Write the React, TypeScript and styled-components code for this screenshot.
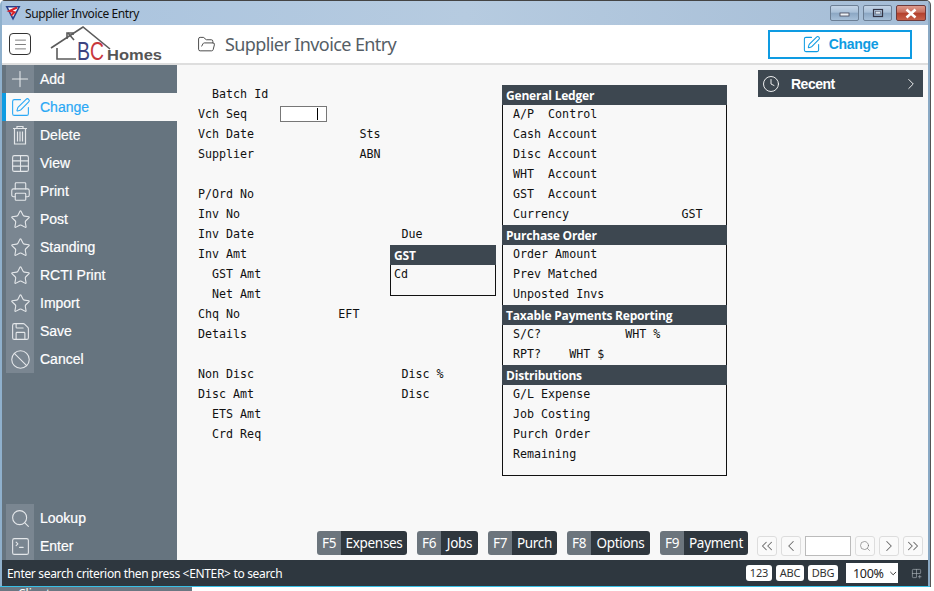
import React from "react";
import styled, { createGlobalStyle } from "styled-components";
import {
  Plus, SquarePen, Table, Printer, Star, Save, Ban, Search, SquareTerminal, Clock,
  ChevronRight, ChevronLeft, ChevronsLeft, ChevronsRight, ChevronDown, FolderOpen, Menu, Grid2x2Plus,
} from "lucide-react";

const Global = createGlobalStyle`
  html, body { margin: 0; padding: 0; width: 934px; height: 591px; overflow: hidden; background: #fff; }
  * { box-sizing: border-box; }
`;

const Page = styled.div`
  width: 934px;
  height: 591px;
  display: flex;
  flex-direction: column;
  overflow: hidden;
  background: #fff;
`;
const WindowFrame = styled.div`
  width: 930px;
  height: 587px;
  display: flex;
  flex-direction: column;
  border-left: 2px solid #8fb0cc;
  border-right: 2px solid #8aa9c4;
  border-top: 1px solid #444;
  border-top-left-radius: 5px;
  border-top-right-radius: 5px;
  background: #f8f8f8;
  box-shadow: 1px 0 0 #555;
`;
const TitleBar = styled.div`
  height: 24px;
  flex: none;
  display: flex;
  align-items: center;
  padding: 0 2px 0 3px;
  background: linear-gradient(90deg, #a9c3de 0%, #b6cbe0 50%, #a5bdd6 100%);
`;
const TitleText = styled.span`
  margin-left: 4px;
  font: 12px "Noto Sans", sans-serif;
  letter-spacing: -0.4px;
  color: #111;
  flex: 1;
`;
const WinButtons = styled.div`
  display: flex;
  gap: 4px;
`;
const WinButton = styled.div<{ $close?: boolean }>`
  width: ${(p) => (p.$close ? 30 : 29)}px;
  height: 16px;
  border: 1px solid ${(p) => (p.$close ? "#6e3a3a" : "#6c7f95")};
  border-radius: 2px;
  display: flex;
  align-items: center;
  justify-content: center;
  background: ${(p) =>
    p.$close
      ? "linear-gradient(#dd9a8c 0%, #c9705f 45%, #b2402c 50%, #c7604a 100%)"
      : "linear-gradient(#c3d4e6 0%, #a9c0d8 45%, #8ba6c3 50%, #a6bfd8 100%)"};
`;
const Header = styled.div`
  height: 40px;
  flex: none;
  display: flex;
  align-items: center;
  background: #fff;
  border-bottom: 2px solid #dedede;
  padding: 0 16px 0 7px;
`;
const Hamburger = styled.div`
  width: 22px;
  height: 22px;
  border: 1px solid #333;
  border-radius: 4px;
  display: flex;
  align-items: center;
  justify-content: center;
  color: #555;
  margin-right: 18px;
`;
const LogoSvg = styled.svg`
  width: 114px;
  height: 40px;
  margin-right: 34px;
  flex: none;
`;
const PageTitle = styled.div`
  display: flex;
  align-items: center;
  gap: 9px;
  flex: 1;
  color: #555e66;
  font: 18px "Noto Sans", sans-serif;
  letter-spacing: -0.6px;
`;
const ChangeButton = styled.div`
  width: 144px;
  height: 29px;
  border: 2px solid #0e9be2;
  display: flex;
  align-items: center;
  justify-content: center;
  gap: 8px;
  color: #0e9be2;
  font: bold 14px "Liberation Sans", sans-serif;
  letter-spacing: -0.3px;
`;
const Body = styled.div`
  flex: 1;
  min-height: 0;
  display: flex;
`;
const Sidebar = styled.nav`
  width: 175px;
  flex: none;
  background: #66747f;
  display: flex;
  flex-direction: column;
  justify-content: space-between;
`;
const NavGroup = styled.div`
  display: flex;
  flex-direction: column;
`;
const NavItem = styled.div<{ $active?: boolean }>`
  height: 28px;
  display: flex;
  align-items: center;
  padding-left: 4px;
  background: ${(p) => (p.$active ? "#f8f8f8" : "#66747f")};
  color: ${(p) => (p.$active ? "#2aa8f5" : "#fff")};
  box-shadow: ${(p) => (p.$active ? "inset 4px 0 0 #0e9be2" : "none")};
  font: 14px "Liberation Sans", sans-serif;
  -webkit-text-stroke: 0.2px currentColor;
`;
const NavIcon = styled.span<{ $active?: boolean }>`
  width: 28px;
  height: 28px;
  margin-right: 6px;
  display: flex;
  align-items: center;
  justify-content: center;
  background: ${(p) => (p.$active ? "transparent" : "#7a8691")};
  color: ${(p) => (p.$active ? "#2aa8f5" : "#e4e7ea")};
`;
const Main = styled.main`
  flex: 1;
  min-width: 0;
  display: flex;
  flex-direction: column;
`;
const Work = styled.div`
  flex: 1;
  min-height: 0;
  display: flex;
  position: relative;
`;
const FormColumn = styled.div`
  width: 325px;
  flex: none;
  padding: 19px 0 0 21px;
`;
const FormRow = styled.div`
  height: 20px;
  display: flex;
  align-items: center;
  white-space: pre;
  font: 11.67px/20px "DejaVu Sans Mono", monospace;
  color: #111;
`;
const SeqLabel = styled.span`
  width: 82px;
`;
const SeqInput = styled.div`
  width: 47px;
  height: 16px;
  background: #fff;
  border: 1px solid #777;
  padding: 1px 0 1px 36px;
`;
const Caret = styled.div`
  width: 1px;
  height: 12px;
  background: #000;
`;
const GstBox = styled.div`
  position: absolute;
  left: 213px;
  top: 180px;
  width: 106px;
  height: 51px;
  border: 1px solid #111;
  border-top: none;
`;
const SectionHead = styled.div`
  height: 20px;
  background: #3d4750;
  color: #fff;
  font: bold 12px/22px "Open Sans", sans-serif;
  letter-spacing: -0.2px;
  padding-left: 4px;
  margin: 0 -1px;
`;
const GstText = styled(FormRow)`
  padding: 0 0 2px 3px;
`;
const Ledger = styled.div`
  width: 225px;
  height: 391px;
  flex: none;
  margin-top: 20px;
  border: 1px solid #111;
  border-top: none;
`;
const LedgerRow = styled(FormRow)`
  padding: 0 0 2px 10px;
`;
const RightColumn = styled.div`
  flex: 1;
  display: flex;
  justify-content: flex-end;
  padding: 5px 5px 0 0;
  align-items: flex-start;
`;
const Recent = styled.div`
  width: 165px;
  height: 27px;
  background: #3d4750;
  color: #fff;
  display: flex;
  align-items: center;
  padding: 0 3px 0 4px;
  font: bold 14px "Liberation Sans", sans-serif;
  letter-spacing: -0.5px;
`;
const RecentLabel = styled.span`
  flex: 1;
  margin-left: 11px;
`;
const ActionBar = styled.div`
  flex: none;
  height: 29px;
  display: flex;
  align-items: flex-start;
  padding-right: 5px;
  justify-content: flex-end;
`;
const FKeys = styled.div`
  display: flex;
  gap: 10px;
  margin-right: 9px;
`;
const FKey = styled.div<{ $w: number }>`
  width: ${(p) => p.$w}px;
  height: 24px;
  display: flex;
  border-radius: 3px;
  overflow: hidden;
  color: #fff;
  font: 13.5px/24px "Noto Sans", sans-serif;
  letter-spacing: -0.3px;
`;
const FCode = styled.span`
  width: 24px;
  flex: none;
  background: #6c757d;
  text-align: center;
`;
const FName = styled.span`
  flex: 1;
  background: #2f373e;
  text-align: center;
`;
const Pager = styled.div`
  display: flex;
  gap: 4px;
  padding-top: 5px;
`;
const PagerButton = styled.div`
  width: 20px;
  height: 20px;
  border: 1px solid #ddd;
  border-radius: 3px;
  display: flex;
  align-items: center;
  justify-content: center;
  color: #6a6a6a;
  background: #fafafa;
`;
const PagerInput = styled.div`
  width: 46px;
  height: 20px;
  background: #fff;
  border: 1px solid #bbb;
`;
const StatusBar = styled.div`
  height: 26px;
  flex: none;
  display: flex;
  align-items: center;
  background: #2e373f;
  color: #fff;
  padding: 0 0 0 5px;
`;
const StatusText = styled.span`
  flex: 1;
  font: 12px "Noto Sans", sans-serif;
  letter-spacing: -0.33px;
`;
const Badge = styled.span<{ $w: number }>`
  width: ${(p) => p.$w}px;
  height: 16px;
  background: #fff;
  color: #333;
  border-radius: 3px;
  margin-right: 4px;
  text-align: center;
  font: 11px/16px "Noto Sans", sans-serif;
  letter-spacing: -0.2px;
`;
const Zoom = styled.div`
  width: 52px;
  height: 20px;
  margin: 0 13px 0 4px;
  background: #fff;
  color: #222;
  display: flex;
  align-items: center;
  gap: 4px;
  padding-left: 7px;
  font: 12.5px "Noto Sans", sans-serif;
  letter-spacing: -0.3px;
`;
const GridIcon = styled.span`
  display: flex;
  margin-right: 6px;
  color: #aab2b8;
`;
const CyanLine = styled.div`
  height: 1px;
  flex: none;
  margin: 0 -2px;
  background: #39c0e6;
`;
const TaskStrip = styled.div`
  width: 192px;
  height: 4px;
  flex: none;
  overflow: hidden;
  background: #6b7782;
  color: #fff;
  padding-left: 18px;
  font: 12px/14px "Noto Sans", sans-serif;
`;

const ic = { size: 21, strokeWidth: 1.25 };

const TrashIcon = () => (
  <svg width="22" height="22" viewBox="0 0 22 22" fill="none" stroke="currentColor" strokeWidth="1.2">
    <path d="M4 4.5h14M8 4.5V2.5h6v2M5.5 4.5v15.5h11V4.5M8.5 7.5v10M11 7.5v10M13.5 7.5v10" />
  </svg>
);

const navTop: [string, React.ReactNode][] = [
  ["Add", <Plus size={26} strokeWidth={1} />],
  ["Change", <SquarePen {...ic} />],
  ["Delete", <TrashIcon />],
  ["View", <Table {...ic} />],
  ["Print", <Printer {...ic} />],
  ["Post", <Star {...ic} />],
  ["Standing", <Star {...ic} />],
  ["RCTI Print", <Star {...ic} />],
  ["Import", <Star {...ic} />],
  ["Save", <Save {...ic} />],
  ["Cancel", <Ban {...ic} />],
];

const formRows = [
  "  Batch Id",
  "",
  "Vch Date               Sts",
  "Supplier               ABN",
  " ",
  "P/Ord No",
  "Inv No",
  "Inv Date                     Due",
  "Inv Amt",
  "  GST Amt",
  "  Net Amt",
  "Chq No              EFT",
  "Details",
  " ",
  "Non Disc                     Disc %",
  "Disc Amt                     Disc",
  "  ETS Amt",
  "  Crd Req",
];

const ledger: [string, string[]][] = [
  ["General Ledger", ["A/P  Control", "Cash Account", "Disc Account", "WHT  Account", "GST  Account", "Currency                GST"]],
  ["Purchase Order", ["Order Amount", "Prev Matched", "Unposted Invs"]],
  ["Taxable Payments Reporting", ["S/C?            WHT %", "RPT?    WHT $"]],
  ["Distributions", ["G/L Expense", "Job Costing", "Purch Order", "Remaining"]],
];

const fkeys: [string, string, number][] = [
  ["F5", "Expenses", 90],
  ["F6", "Jobs", 61],
  ["F7", "Purch", 69],
  ["F8", "Options", 83],
  ["F9", "Payment", 88],
];

export default function App() {
  return (
    <Page>
      <Global />
      <WindowFrame>
        <TitleBar>
          <svg width="16" height="16" viewBox="0 0 16 16">
            <path d="M0.5 1h15L8 15.5z" fill="#27408b" />
            <path d="M3 2.5h10L8 12z" fill="#fff" />
            <path d="M12 2.5L4.5 6l5 1.2L6 10.5" fill="none" stroke="#d8232a" strokeWidth="2" />
          </svg>
          <TitleText>Supplier Invoice Entry</TitleText>
          <WinButtons>
            <WinButton>
              <svg width="12" height="8" viewBox="0 0 12 8"><rect x="1" y="4" width="9" height="3" fill="#eef3f8" stroke="#445" strokeWidth="0.8" /></svg>
            </WinButton>
            <WinButton>
              <svg width="12" height="10" viewBox="0 0 12 10"><rect x="1.5" y="1.5" width="9" height="7" fill="none" stroke="#334" strokeWidth="1.2" /><rect x="3.5" y="3.5" width="5" height="2.5" fill="#dde7f0" stroke="#667" strokeWidth="0.6" /></svg>
            </WinButton>
            <WinButton $close>
              <svg width="14" height="11" viewBox="0 0 14 11"><path d="M2.5 1.5l9 8M11.5 1.5l-9 8" stroke="#fff" strokeWidth="2.6" /></svg>
            </WinButton>
          </WinButtons>
        </TitleBar>
        <Header>
          <Hamburger><Menu size={15} strokeWidth={1.2} /></Hamburger>
          <LogoSvg viewBox="0 0 114 40">
            <g fill="none" stroke="#5b5b5b" strokeWidth="1.6">
              <path d="M2 24L34 3L61 25" />
              <path d="M8 24V35H27" />
              <path d="M18 15V9H24V11" />
              <path d="M19 9L25 16" />
            </g>
            <text x="28" y="36" fontFamily="'Liberation Sans', sans-serif" fontSize="25" textLength="13" lengthAdjust="spacingAndGlyphs" fill="#3d4380">B</text>
            <text x="41" y="36" fontFamily="'Liberation Sans', sans-serif" fontSize="25" textLength="14" lengthAdjust="spacingAndGlyphs" fill="#c8373c">C</text>
            <text x="58" y="36" fontFamily="'Liberation Sans', sans-serif" fontSize="15" fontWeight="bold" textLength="55" lengthAdjust="spacingAndGlyphs" fill="#555">Homes</text>
          </LogoSvg>
          <PageTitle>
            <FolderOpen size={19} strokeWidth={1.2} color="#444" />
            Supplier Invoice Entry
          </PageTitle>
          <ChangeButton>
            <SquarePen size={19} strokeWidth={1.3} />
            Change
          </ChangeButton>
        </Header>
        <Body>
          <Sidebar>
            <NavGroup>
              {navTop.map(([label, icon]) => (
                <NavItem key={label} $active={label === "Change"}>
                  <NavIcon $active={label === "Change"}>{icon}</NavIcon>
                  {label}
                </NavItem>
              ))}
            </NavGroup>
            <NavGroup>
              <NavItem><NavIcon><Search {...ic} /></NavIcon>Lookup</NavItem>
              <NavItem><NavIcon><SquareTerminal {...ic} /></NavIcon>Enter</NavItem>
            </NavGroup>
          </Sidebar>
          <Main>
            <Work>
              <FormColumn>
                {formRows.map((r, i) =>
                  r === "" ? (
                    <FormRow key={i}>
                      <SeqLabel>Vch Seq</SeqLabel>
                      <SeqInput><Caret /></SeqInput>
                    </FormRow>
                  ) : (
                    <FormRow key={i}>{r}</FormRow>
                  )
                )}
              </FormColumn>
              <GstBox>
                <SectionHead>GST</SectionHead>
                <GstText>Cd</GstText>
              </GstBox>
              <Ledger>
                {ledger.map(([head, rows]) => (
                  <React.Fragment key={head}>
                    <SectionHead>{head}</SectionHead>
                    {rows.map((r) => <LedgerRow key={r}>{r}</LedgerRow>)}
                  </React.Fragment>
                ))}
              </Ledger>
              <RightColumn>
                <Recent>
                  <Clock size={18} strokeWidth={1.2} />
                  <RecentLabel>Recent</RecentLabel>
                  <ChevronRight size={18} strokeWidth={1.2} />
                </Recent>
              </RightColumn>
            </Work>
            <ActionBar>
              <FKeys>
                {fkeys.map(([code, name, w]) => (
                  <FKey key={code} $w={w}><FCode>{code}</FCode><FName>{name}</FName></FKey>
                ))}
              </FKeys>
              <Pager>
                <PagerButton><ChevronsLeft size={18} strokeWidth={1.4} /></PagerButton>
                <PagerButton><ChevronLeft size={18} strokeWidth={1.4} /></PagerButton>
                <PagerInput />
                <PagerButton><Search size={12} strokeWidth={1.2} /></PagerButton>
                <PagerButton><ChevronRight size={18} strokeWidth={1.4} /></PagerButton>
                <PagerButton><ChevronsRight size={18} strokeWidth={1.4} /></PagerButton>
              </Pager>
            </ActionBar>
          </Main>
        </Body>
        <StatusBar>
          <StatusText>Enter search criterion then press &lt;ENTER&gt; to search</StatusText>
          <Badge $w={26}>123</Badge>
          <Badge $w={28}>ABC</Badge>
          <Badge $w={30}>DBG</Badge>
          <Zoom>100% <ChevronDown size={11} strokeWidth={2} /></Zoom>
          <GridIcon><Grid2x2Plus size={11} strokeWidth={1.4} /></GridIcon>
        </StatusBar>
        <CyanLine />
      </WindowFrame>
      <TaskStrip>Client</TaskStrip>
    </Page>
  );
}
